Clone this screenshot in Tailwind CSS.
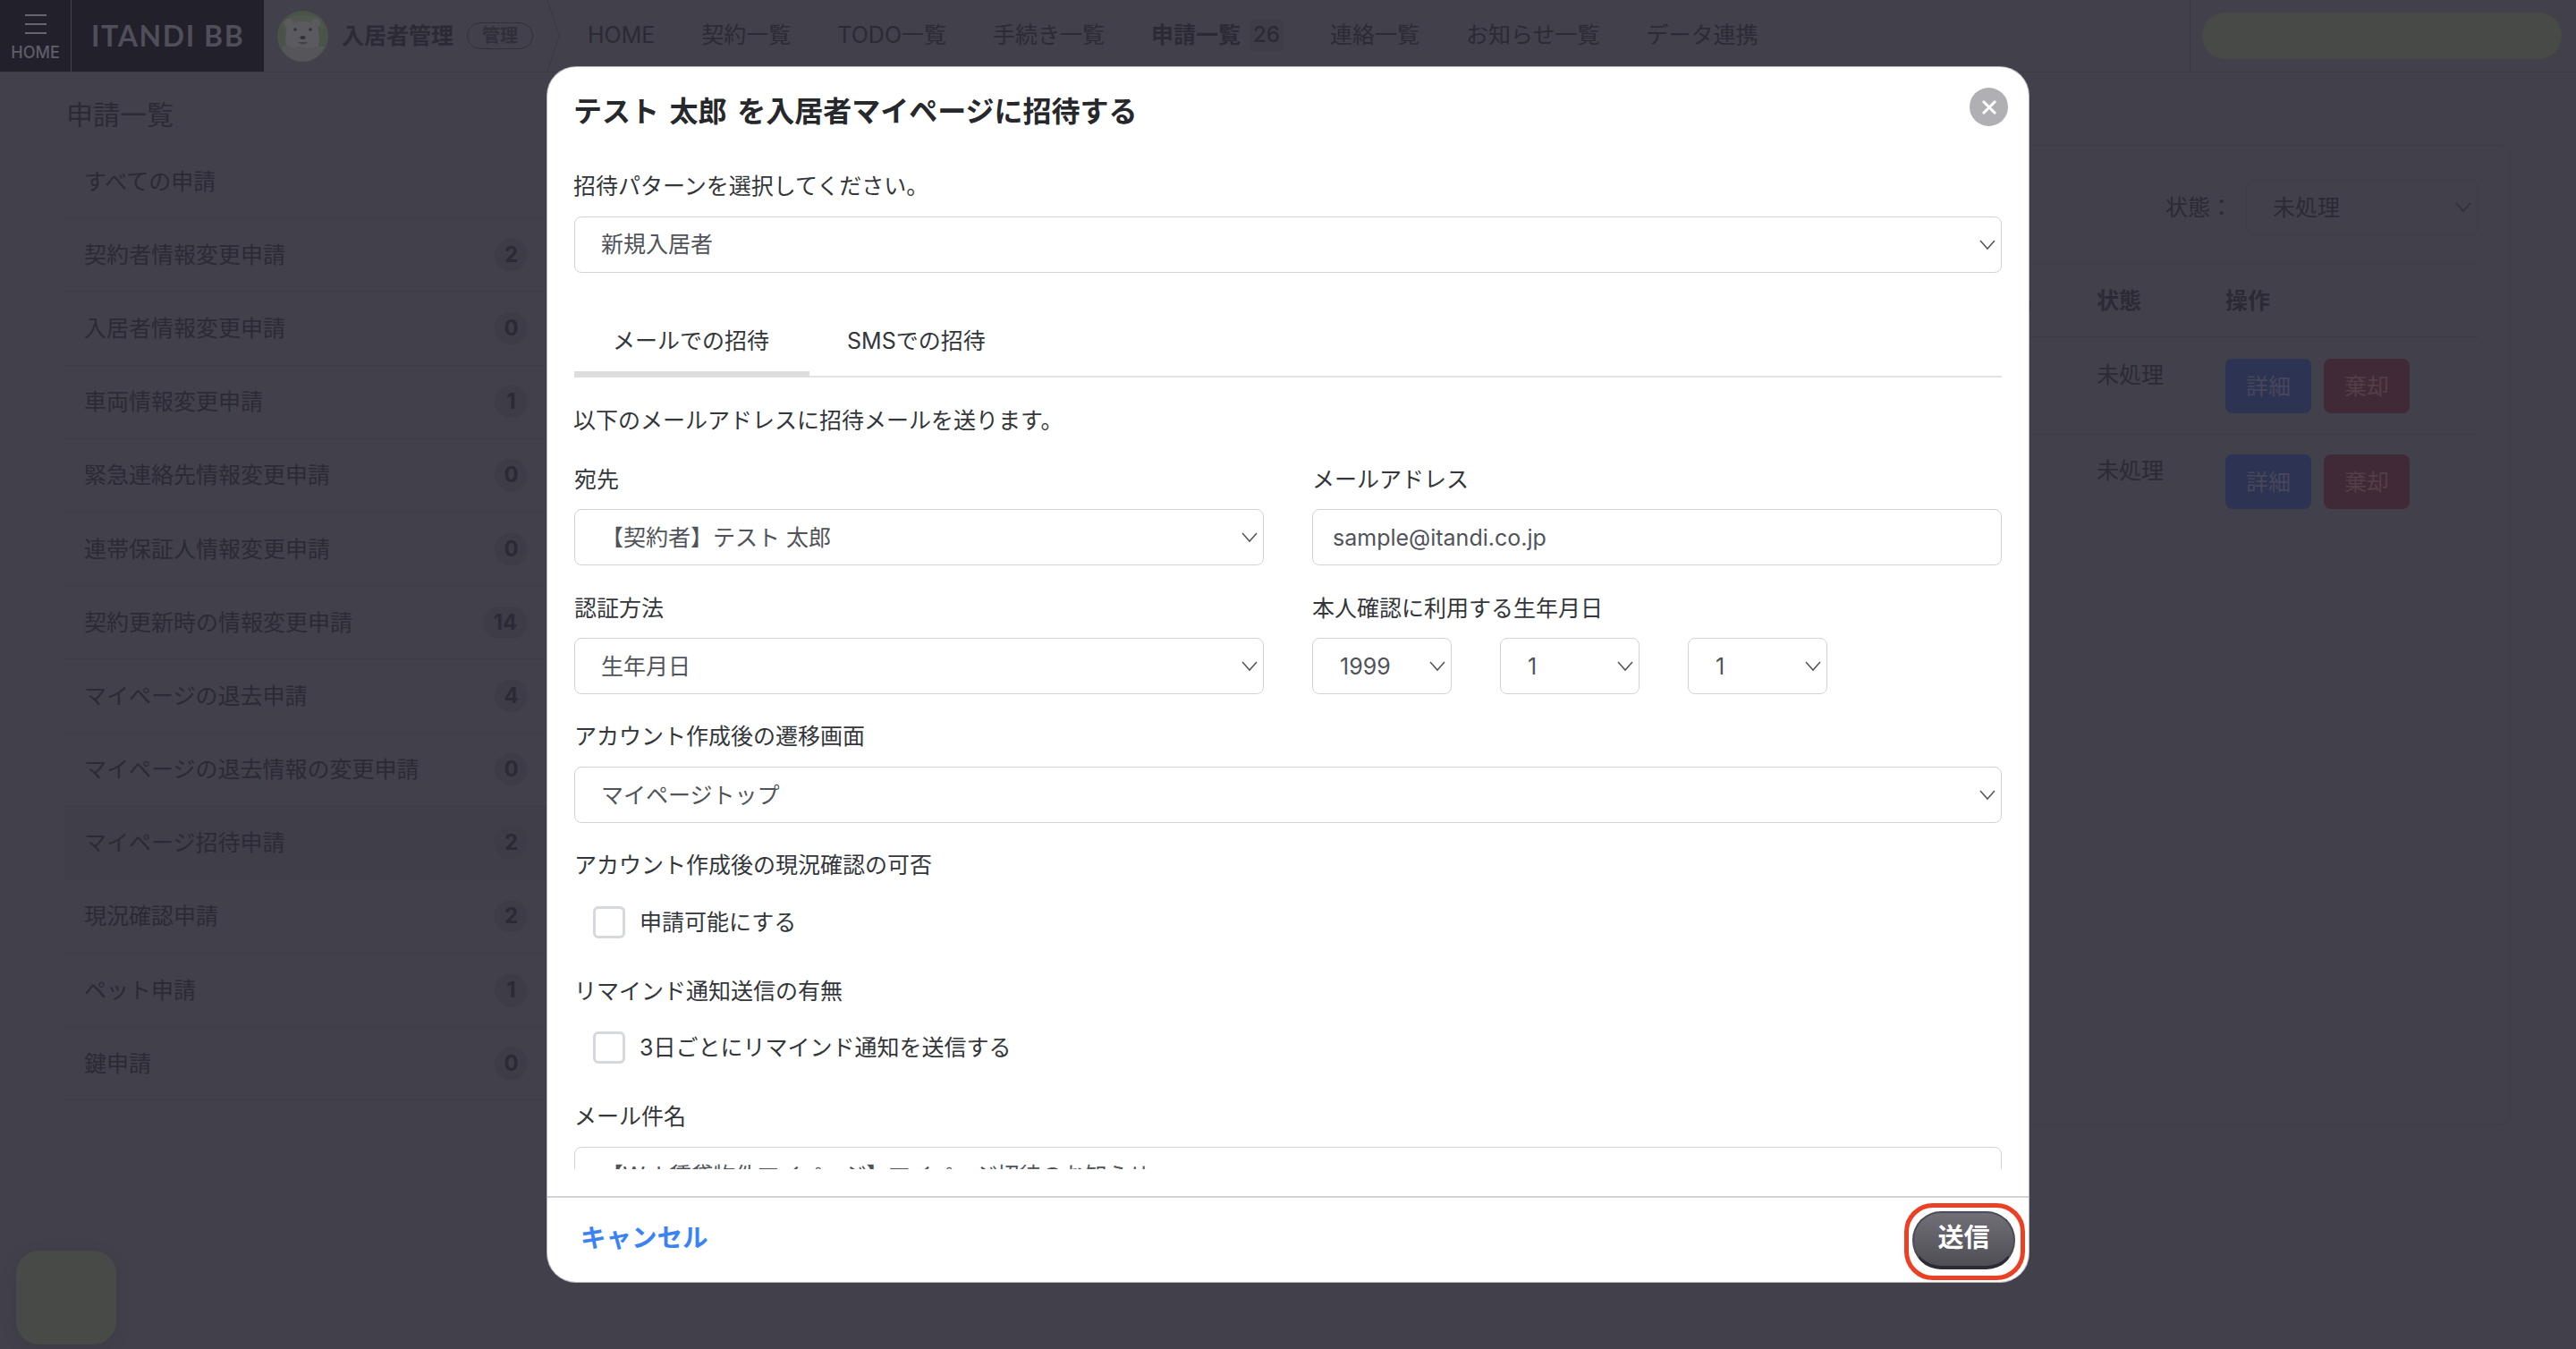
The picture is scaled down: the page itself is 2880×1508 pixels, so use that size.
<!DOCTYPE html>
<html lang="ja">
<head>
  <meta charset="UTF-8" />
  <title>申請一覧</title>
  <script src="https://cdn.jsdelivr.net/npm/@tailwindcss/browser@4"></script>
</head>
<body class="relative w-[2880px] h-[1508px] overflow-hidden bg-[#42404a] text-[25px] leading-[36px] text-[#2c2a34] font-[Inter,'Noto_Sans_CJK_JP',sans-serif]">

  <!-- Header -->
  <header class="flex h-[81px] border-b border-[#3c3a44]">
    <div class="flex w-[295px] h-[80px] bg-[#22202b] text-[#5f5d68]">
      <div class="flex flex-col items-center w-[80px] border-r border-[#45434d] pt-[16px]">
        <div class="flex flex-col gap-[8px]">
          <span class="block w-[24px] h-[2px] bg-[#67656f]"></span>
          <span class="block w-[24px] h-[2px] bg-[#67656f]"></span>
          <span class="block w-[24px] h-[2px] bg-[#67656f]"></span>
        </div>
        <span class="mt-[9px] text-[18px] leading-[24px] font-medium">HOME</span>
      </div>
      <span class="ml-[22px] mt-[21px] text-[32px] leading-[38px] font-bold tracking-[1.6px] text-[#504e59] font-[Lato,sans-serif]">ITANDI BB</span>
    </div>
    <div class="flex items-center ml-[15px] w-[302px] h-[80px]">
      <svg class="w-[57px] h-[57px]" viewBox="0 0 57 57">
        <circle cx="28.5" cy="28.5" r="28.5" fill="#4a5347" />
        <path d="M6 12 Q26 0 48 8 L52 20 Q30 8 8 22 Z" fill="#50574c" />
        <circle cx="13" cy="14" r="5" fill="#5b5a60" />
        <circle cx="43" cy="14" r="5" fill="#5b5a60" />
        <path d="M12 16 Q28 8 44 16 Q49 30 45 42 L11 42 Q7 30 12 16 Z" fill="#5b5a60" />
        <circle cx="20" cy="21" r="1.8" fill="#33313b" />
        <circle cx="37" cy="21" r="1.8" fill="#33313b" />
        <ellipse cx="28.5" cy="30" rx="3" ry="2" fill="#33313b" />
        <path d="M23 35 Q28.5 40 34 35 Z" fill="#4a3d44" />
        <path d="M4 40 Q12 36 18 42 Q28 38 36 43 Q46 38 53 40 Q44 57 28.5 57 Q12 57 4 40 Z" fill="#55555a" />
      </svg>
      <span class="ml-[15px] font-bold whitespace-nowrap">入居者管理</span>
      <span class="ml-[15px] flex items-center justify-center w-[74px] h-[30px] rounded-full border border-[#312f39] text-[20px] font-bold text-[#312f39]">管理</span>
    </div>
    <svg class="w-[14px] h-[80px]" viewBox="0 0 14 80" fill="none">
      <path d="M0 0 L13 40 L0 80" stroke="#3a3842" stroke-width="1" />
    </svg>
    <nav class="flex items-center h-[78px] ml-[31px] gap-[52px] whitespace-nowrap">
      <span>HOME</span>
      <span>契約一覧</span>
      <span>TODO一覧</span>
      <span>手続き一覧</span>
      <span class="relative flex items-center font-bold">申請一覧
        <span class="ml-[10px] px-[4px] rounded-[6px] bg-[#3f3d47] font-medium text-[24px]">26</span>
        <span class="absolute left-[-12px] right-[-13px] top-[57px] h-[3px] bg-[#23212c]"></span>
      </span>
      <span>連絡一覧</span>
      <span>お知らせ一覧</span>
      <span>データ連携</span>
    </nav>
    <div class="flex items-center ml-auto w-[432px] h-[80px] border-l border-[#3a3842] pl-[13px]">
      <div class="w-[402px] h-[52px] rounded-[26px] bg-[#484a47]"></div>
    </div>
  </header>

  <div class="flex">
    <!-- Sidebar -->
    <aside class="w-[578px] ml-[72px] shrink-0">
      <h2 class="mt-[27px] mb-[14px] ml-[2px] text-[30px] leading-[40px]">申請一覧</h2>
      <ul>
        <li class="flex items-center justify-between h-[82.2px] pl-[22px] pr-[60px] border-b border-[#3e3c46]">すべての申請</li>
        <li class="flex items-center justify-between h-[82.2px] pl-[22px] pr-[60px] border-b border-[#3e3c46]">契約者情報変更申請<span class="flex items-center justify-center w-[37px] h-[36px] rounded-full bg-[#3e3c46] font-bold text-[24px]">2</span></li>
        <li class="flex items-center justify-between h-[82.2px] pl-[22px] pr-[60px] border-b border-[#3e3c46]">入居者情報変更申請<span class="flex items-center justify-center w-[37px] h-[36px] rounded-full bg-[#3e3c46] font-bold text-[24px]">0</span></li>
        <li class="flex items-center justify-between h-[82.2px] pl-[22px] pr-[60px] border-b border-[#3e3c46]">車両情報変更申請<span class="flex items-center justify-center w-[37px] h-[36px] rounded-full bg-[#3e3c46] font-bold text-[24px]">1</span></li>
        <li class="flex items-center justify-between h-[82.2px] pl-[22px] pr-[60px] border-b border-[#3e3c46]">緊急連絡先情報変更申請<span class="flex items-center justify-center w-[37px] h-[36px] rounded-full bg-[#3e3c46] font-bold text-[24px]">0</span></li>
        <li class="flex items-center justify-between h-[82.2px] pl-[22px] pr-[60px] border-b border-[#3e3c46]">連帯保証人情報変更申請<span class="flex items-center justify-center w-[37px] h-[36px] rounded-full bg-[#3e3c46] font-bold text-[24px]">0</span></li>
        <li class="flex items-center justify-between h-[82.2px] pl-[22px] pr-[60px] border-b border-[#3e3c46]">契約更新時の情報変更申請<span class="flex items-center justify-center w-[50px] h-[36px] rounded-full bg-[#3e3c46] font-bold text-[24px]">14</span></li>
        <li class="flex items-center justify-between h-[82.2px] pl-[22px] pr-[60px] border-b border-[#3e3c46]">マイページの退去申請<span class="flex items-center justify-center w-[37px] h-[36px] rounded-full bg-[#3e3c46] font-bold text-[24px]">4</span></li>
        <li class="flex items-center justify-between h-[82.2px] pl-[22px] pr-[60px] border-b border-[#3e3c46]">マイページの退去情報の変更申請<span class="flex items-center justify-center w-[37px] h-[36px] rounded-full bg-[#3e3c46] font-bold text-[24px]">0</span></li>
        <li class="flex items-center justify-between h-[82.2px] pl-[22px] pr-[60px] border-b border-[#3e3c46] bg-[#403e48]">マイページ招待申請<span class="flex items-center justify-center w-[37px] h-[36px] rounded-full bg-[#3e3c46] font-bold text-[24px]">2</span></li>
        <li class="flex items-center justify-between h-[82.2px] pl-[22px] pr-[60px] border-b border-[#3e3c46]">現況確認申請<span class="flex items-center justify-center w-[37px] h-[36px] rounded-full bg-[#3e3c46] font-bold text-[24px]">2</span></li>
        <li class="flex items-center justify-between h-[82.2px] pl-[22px] pr-[60px] border-b border-[#3e3c46]">ペット申請<span class="flex items-center justify-center w-[37px] h-[36px] rounded-full bg-[#3e3c46] font-bold text-[24px]">1</span></li>
        <li class="flex items-center justify-between h-[82.2px] pl-[22px] pr-[60px] border-b border-[#3e3c46]">鍵申請<span class="flex items-center justify-center w-[37px] h-[36px] rounded-full bg-[#3e3c46] font-bold text-[24px]">0</span></li>
      </ul>
    </aside>

    <!-- Main card -->
    <main class="w-[2157px] h-[1096px] mt-[81px] border border-[#3e3c46] rounded-[12px]">
      <div class="flex items-center justify-end h-[62px] mt-[38px] pr-[36px]">
        <span class="mr-[15px]">状態：</span>
        <div class="relative w-[259px]">
          <select class="appearance-none w-full h-[62px] pl-[29px] rounded-[8px] border border-[#3e3c46] bg-transparent"><option>未処理</option></select>
          <svg class="absolute right-[7px] top-[25px] w-[18px] h-[12px]" viewBox="0 0 18 12" fill="none"><path d="M1 1 L9 10 L17 1" stroke="#312f39" stroke-width="1.5" /></svg>
        </div>
      </div>
      <div class="ml-[39px] mr-[36px] mt-[31px] border-t border-[#3e3c46]">
        <div class="grid grid-cols-[1654px_144px_1fr] items-center h-[83px] border-b-2 border-[#3e3c46] font-bold">
          <span class="pr-[72px] text-right">物件名</span>
          <span>状態</span>
          <span>操作</span>
        </div>
        <div class="grid grid-cols-[1654px_144px_1fr] items-start h-[108px] pt-[23px] border-b border-[#3e3c46]">
          <span></span>
          <span>未処理</span>
          <div class="flex gap-[14px]">
            <button class="w-[96px] h-[61px] rounded-[8px] bg-[#2d3353] text-[#474759]">詳細</button>
            <button class="w-[96px] h-[61px] rounded-[8px] bg-[#412a37] text-[#553d4a]">棄却</button>
          </div>
        </div>
        <div class="grid grid-cols-[1654px_144px_1fr] items-start h-[108px] pt-[22px]">
          <span></span>
          <span>未処理</span>
          <div class="flex gap-[14px]">
            <button class="w-[96px] h-[61px] rounded-[8px] bg-[#2d3353] text-[#474759]">詳細</button>
            <button class="w-[96px] h-[61px] rounded-[8px] bg-[#412a37] text-[#553d4a]">棄却</button>
          </div>
        </div>
      </div>
    </main>
  </div>

  <!-- Floating widget, bottom left -->
  <div class="absolute left-[18px] top-[1398px] w-[112px] h-[105px] rounded-[26px] bg-[#484a47] shadow-[0_4px_20px_rgba(0,0,0,0.08)]"></div>

  <!-- Modal -->
  <div class="absolute inset-0 flex justify-center items-start pt-[75px]">
    <div class="relative flex flex-col w-[1656px] h-[1358px] rounded-[32px] bg-white text-[#33363a] shadow-[0_0_0_1px_#b5b5b8]">
      <button class="absolute right-[23px] top-[23px] flex items-center justify-center w-[43px] h-[43px] rounded-full bg-[#b0afb3]">
        <svg class="w-[18px] h-[18px]" viewBox="0 0 18 18" fill="none"><path d="M2 2 L16 16 M16 2 L2 16" stroke="#fff" stroke-width="3" /></svg>
      </button>

      <div class="h-[1232px] overflow-hidden px-[30px]">
        <h1 class="mt-[30px] -ml-[1px] text-[32px] leading-[40px] font-bold text-[#26282b] [word-spacing:4px]">テスト 太郎 を入居者マイページに招待する</h1>

        <p class="mt-[45px] mb-[16px] -ml-[1px]">招待パターンを選択してください。</p>
        <div class="relative">
          <select class="appearance-none w-full h-[63px] pl-[29px] pb-[2px] rounded-[8px] border border-[#d2d3d5] bg-white text-[#50545a]"><option>新規入居者</option></select>
          <svg class="absolute right-[7px] top-[26px] w-[18px] h-[12px]" viewBox="0 0 18 12" fill="none"><path d="M1 1 L9 10 L17 1" stroke="#50545a" stroke-width="1.5" /></svg>
        </div>

        <div class="flex mt-[58px] h-[59px] border-b-2 border-[#e2e3e5]">
          <div class="h-[59px] pl-[43px] pr-[45px] border-b-[7px] border-[#dddddd]">メールでの招待</div>
          <div class="h-[59px] pl-[42px]">SMSでの招待</div>
        </div>

        <p class="mt-[30px] -ml-[1px]">以下のメールアドレスに招待メールを送ります。</p>

        <div class="grid grid-cols-2 gap-x-[54px] gap-y-[30px] mt-[30px]">
          <div>
            <label class="block mb-[15px]">宛先</label>
            <div class="relative">
              <select class="appearance-none w-full h-[63px] pl-[29px] rounded-[8px] border border-[#d2d3d5] bg-white text-[#50545a]"><option>【契約者】テスト 太郎</option></select>
              <svg class="absolute right-[7px] top-[26px] w-[18px] h-[12px]" viewBox="0 0 18 12" fill="none"><path d="M1 1 L9 10 L17 1" stroke="#50545a" stroke-width="1.5" /></svg>
            </div>
          </div>
          <div>
            <label class="block mb-[15px]">メールアドレス</label>
            <input class="w-full h-[63px] px-[22px] rounded-[8px] border border-[#d2d3d5] text-[#50545a]" value="sample@itandi.co.jp" />
          </div>
          <div>
            <label class="block mb-[15px]">認証方法</label>
            <div class="relative">
              <select class="appearance-none w-full h-[63px] pl-[29px] rounded-[8px] border border-[#d2d3d5] bg-white text-[#50545a]"><option>生年月日</option></select>
              <svg class="absolute right-[7px] top-[26px] w-[18px] h-[12px]" viewBox="0 0 18 12" fill="none"><path d="M1 1 L9 10 L17 1" stroke="#50545a" stroke-width="1.5" /></svg>
            </div>
          </div>
          <div>
            <label class="block mb-[15px]">本人確認に利用する生年月日</label>
            <div class="flex gap-[54px]">
              <div class="relative w-[156px]">
                <select class="appearance-none w-full h-[63px] pl-[30px] rounded-[8px] border border-[#d2d3d5] bg-white text-[#50545a]"><option>1999</option></select>
                <svg class="absolute right-[7px] top-[26px] w-[18px] h-[12px]" viewBox="0 0 18 12" fill="none"><path d="M1 1 L9 10 L17 1" stroke="#50545a" stroke-width="1.5" /></svg>
              </div>
              <div class="relative w-[156px]">
                <select class="appearance-none w-full h-[63px] pl-[30px] rounded-[8px] border border-[#d2d3d5] bg-white text-[#50545a]"><option>1</option></select>
                <svg class="absolute right-[7px] top-[26px] w-[18px] h-[12px]" viewBox="0 0 18 12" fill="none"><path d="M1 1 L9 10 L17 1" stroke="#50545a" stroke-width="1.5" /></svg>
              </div>
              <div class="relative w-[156px]">
                <select class="appearance-none w-full h-[63px] pl-[30px] rounded-[8px] border border-[#d2d3d5] bg-white text-[#50545a]"><option>1</option></select>
                <svg class="absolute right-[7px] top-[26px] w-[18px] h-[12px]" viewBox="0 0 18 12" fill="none"><path d="M1 1 L9 10 L17 1" stroke="#50545a" stroke-width="1.5" /></svg>
              </div>
            </div>
          </div>
        </div>

        <label class="block mt-[29px] mb-[16px]">アカウント作成後の遷移画面</label>
        <div class="relative">
          <select class="appearance-none w-full h-[63px] pl-[29px] rounded-[8px] border border-[#d2d3d5] bg-white text-[#50545a]"><option>マイページトップ</option></select>
          <svg class="absolute right-[7px] top-[26px] w-[18px] h-[12px]" viewBox="0 0 18 12" fill="none"><path d="M1 1 L9 10 L17 1" stroke="#50545a" stroke-width="1.5" /></svg>
        </div>

        <p class="mt-[29px]">アカウント作成後の現況確認の可否</p>
        <label class="flex items-center gap-[16px] ml-[21px] mt-[28px]">
          <input type="checkbox" class="appearance-none w-[36px] h-[36px] rounded-[6px] border-[3px] border-[#d5d9dd]" />
          申請可能にする
        </label>

        <p class="mt-[41px]">リマインド通知送信の有無</p>
        <label class="flex items-center gap-[16px] ml-[21px] mt-[27px]">
          <input type="checkbox" class="appearance-none w-[36px] h-[36px] rounded-[6px] border-[3px] border-[#d5d9dd]" />
          3日ごとにリマインド通知を送信する
        </label>

        <label class="block mt-[41px] mb-[16px]">メール件名</label>
        <input class="w-full h-[63px] pl-[29px] pr-[30px] pb-[4px] rounded-[8px] border border-[#d2d3d5] text-[#50545a] tracking-[-0.5px]" value="【Web賃貸物件マイページ】マイページ招待のお知らせ" />
      </div>

      <footer class="flex items-center justify-between h-[96px] mt-[30px] pl-[37px] pr-[15px] border-t-2 border-[#d2d3d5]">
        <button class="-mt-[5px] text-[28.5px] font-bold text-[#3b82f6]">キャンセル</button>
        <div class="relative">
          <button class="block w-[115px] h-[65px] pb-[2px] rounded-[32px] border-2 border-b-[4px] border-[#4d4c55] border-b-[#2c2b35] bg-linear-to-b from-[#716f77] to-[#4f4e55] text-[29px] font-bold text-white">送信</button>
          <span class="absolute -left-[9px] -right-[11px] -top-[9px] -bottom-[12px] rounded-[32px] border-[5px] border-[#ea4025]"></span>
        </div>
      </footer>
    </div>
  </div>
</body>
</html>
